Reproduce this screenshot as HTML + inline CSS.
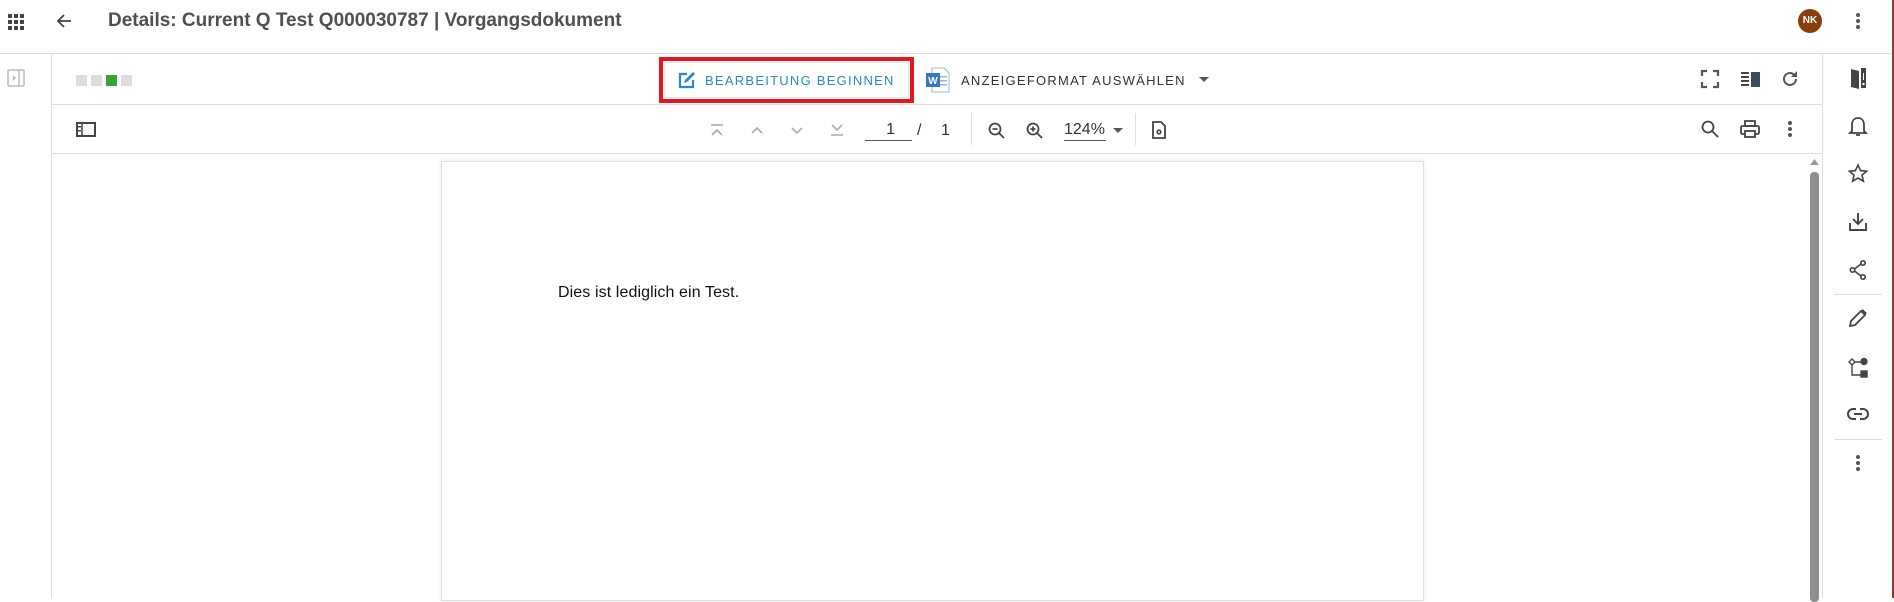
<!DOCTYPE html>
<html><head><meta charset="utf-8"><style>
*{margin:0;padding:0;box-sizing:border-box}
body{width:1894px;height:598px;overflow:hidden;background:#fff;font-family:"Liberation Sans",sans-serif;position:relative;color:#333}
.a{position:absolute}
svg{position:absolute;overflow:visible}
.hl{position:absolute;height:1px;background:#dedede}
.vl{position:absolute;width:1px;background:#dedede}
.btxt{position:absolute;font-size:13px;letter-spacing:1.25px;font-weight:500;white-space:nowrap}
</style></head><body>
<svg style="left:8px;top:14px" width="16" height="16" viewBox="0 0 16 16" fill="#444">
<rect x="0" y="0" width="4" height="4"/><rect x="6" y="0" width="4" height="4"/><rect x="12" y="0" width="4" height="4"/>
<rect x="0" y="6" width="4" height="4"/><rect x="6" y="6" width="4" height="4"/><rect x="12" y="6" width="4" height="4"/>
<rect x="0" y="12" width="4" height="4"/><rect x="6" y="12" width="4" height="4"/><rect x="12" y="12" width="4" height="4"/></svg>
<svg style="left:56px;top:13px" width="16" height="16" viewBox="0 0 16 16"><path d="M15 8H2M8 2L2 8l6 6" stroke="#444" stroke-width="1.8" fill="none"/></svg>
<div class="a" style="left:108px;top:10px;font-size:19px;font-weight:bold;color:#505050;white-space:nowrap">Details: Current Q Test Q000030787 | Vorgangsdokument</div>
<div class="a" style="left:1798px;top:9px;width:24px;height:24px;border-radius:50%;background:#8a3e0c;color:#fff;font-size:10px;font-weight:bold;text-align:center;line-height:24px">NK</div>
<svg style="left:1856px;top:13px" width="4" height="16"><circle cx="2" cy="2" r="2" fill="#555"/><circle cx="2" cy="8" r="2" fill="#555"/><circle cx="2" cy="14" r="2" fill="#555"/></svg>
<div class="hl" style="left:0;top:53px;width:1893px"></div>
<div class="a" style="left:1892px;top:0;width:2px;height:598px;background:#8b3a2e"></div>
<div class="vl" style="left:51px;top:54px;height:544px"></div>
<svg style="left:7px;top:69px" width="18" height="18" viewBox="0 0 18 18"><rect x="1" y="1" width="16" height="16" rx="1" fill="none" stroke="#bbb" stroke-width="1.5"/><line x1="12" y1="1" x2="12" y2="17" stroke="#bbb" stroke-width="1.5"/><path d="M6 6l3 3-3 3z" fill="#bbb"/></svg>
<div class="a" style="left:76px;top:75px;width:11px;height:11px;background:#ddd"></div>
<div class="a" style="left:91px;top:75px;width:11px;height:11px;background:#ddd"></div>
<div class="a" style="left:106px;top:75px;width:11px;height:11px;background:#3aa03a"></div>
<div class="a" style="left:121px;top:75px;width:11px;height:11px;background:#ddd"></div>
<div class="a" style="left:659px;top:57px;width:255px;height:46px;border:4px solid #e8151f"></div>
<div class="a" style="left:664px;top:62px;width:245px;height:36px;border:1px solid #e6e6e6;border-radius:3px"></div>
<svg style="left:678px;top:71px" width="18" height="18" viewBox="0 0 18 18"><path d="M9 3H2v13h13V9" fill="none" stroke="#2a88c8" stroke-width="2.2"/><path d="M6 12l1-3 8-8 2 2-8 8z" fill="#2a88c8"/></svg>
<div class="btxt" style="left:705px;top:73px;color:#2a88c8">BEARBEITUNG BEGINNEN</div>
<svg style="left:926px;top:67px" width="24" height="26" viewBox="0 0 24 26"><path d="M6 1h12l5 5v19H6z" fill="#fff" stroke="#9bb3d8"/><rect x="13" y="9" width="8" height="1.5" fill="#9bb3d8"/><rect x="13" y="13" width="8" height="1.5" fill="#9bb3d8"/><rect x="13" y="17" width="8" height="1.5" fill="#9bb3d8"/><rect x="0" y="6" width="14" height="14" fill="#3b75c4"/><text x="7" y="17" font-size="10" fill="#fff" text-anchor="middle" font-family="Liberation Sans" font-weight="bold">W</text></svg>
<div class="btxt" style="left:961px;top:73px;color:#333">ANZEIGEFORMAT AUSWÄHLEN</div>
<svg style="left:1199px;top:77px" width="10" height="5"><path d="M0 0h10L5 5z" fill="#555"/></svg>
<svg style="left:1701px;top:70px" width="18" height="18" viewBox="0 0 18 18" fill="none" stroke="#555" stroke-width="2.2"><path d="M1 6V1h5M12 1h5v5M17 12v5h-5M6 17H1v-5"/></svg>
<svg style="left:1741px;top:72px" width="19" height="15" viewBox="0 0 19 15" fill="#444"><rect x="0" y="0" width="8" height="2"/><rect x="0" y="4" width="8" height="2"/><rect x="0" y="8" width="8" height="2"/><rect x="0" y="12" width="8" height="2"/><rect x="10" y="0" width="9" height="15" fill="#3f4a5a"/></svg>
<svg style="left:1781px;top:70px" width="18" height="18" viewBox="0 0 18 18"><path d="M15 9a6 6 0 1 1-2-4.5" fill="none" stroke="#555" stroke-width="2"/><path d="M16 1v6h-6z" fill="#555"/></svg>
<div class="hl" style="left:51px;top:104px;width:1772px"></div>
<svg style="left:76px;top:122px" width="20" height="15" viewBox="0 0 20 15"><rect x="1" y="1" width="18" height="13" fill="none" stroke="#444" stroke-width="2"/><line x1="6" y1="1" x2="6" y2="14" stroke="#444" stroke-width="1.5"/><rect x="2" y="4" width="3" height="1.5" fill="#444"/><rect x="2" y="8" width="3" height="1.5" fill="#444"/></svg>
<svg style="left:711px;top:124px" width="12" height="12" viewBox="0 0 12 12" fill="none" stroke="#aaa" stroke-width="1.6"><path d="M0 1h12M1 11l5-5 5 5"/></svg>
<svg style="left:751px;top:126px" width="12" height="8" viewBox="0 0 12 8" fill="none" stroke="#aaa" stroke-width="1.6"><path d="M1 7l5-5 5 5"/></svg>
<svg style="left:791px;top:127px" width="12" height="8" viewBox="0 0 12 8" fill="none" stroke="#aaa" stroke-width="1.6"><path d="M1 1l5 5 5-5"/></svg>
<svg style="left:831px;top:124px" width="12" height="12" viewBox="0 0 12 12" fill="none" stroke="#aaa" stroke-width="1.6"><path d="M1 1l5 5 5-5M0 11h12"/></svg>
<div class="a" style="left:865px;top:121px;width:47px;height:20px;border-bottom:1px solid #555;text-align:right;padding-right:17px;font-size:16px;color:#333">1</div>
<div class="a" style="left:917px;top:122px;font-size:16px;color:#333">/</div>
<div class="a" style="left:941px;top:122px;font-size:16px;color:#333">1</div>
<div class="vl" style="left:971px;top:113px;height:32px"></div>
<svg style="left:988px;top:122px" width="18" height="18" viewBox="0 0 18 18" fill="none" stroke="#444" stroke-width="1.8"><circle cx="7" cy="7" r="5.5"/><path d="M11 11l5 5M4.5 7h5"/></svg>
<svg style="left:1026px;top:122px" width="18" height="18" viewBox="0 0 18 18" fill="none" stroke="#444" stroke-width="1.8"><circle cx="7" cy="7" r="5.5"/><path d="M11 11l5 5M4.5 7h5M7 4.5v5"/></svg>
<div class="a" style="left:1064px;top:121px;width:42px;height:20px;border-bottom:1px solid #555;font-size:16px;color:#333">124%</div>
<svg style="left:1113px;top:128px" width="10" height="5"><path d="M0 0h10L5 5z" fill="#555"/></svg>
<div class="vl" style="left:1135px;top:113px;height:32px"></div>
<svg style="left:1152px;top:121px" width="14" height="18" viewBox="0 0 14 18"><path d="M1 1h8l4 4v12H1z" fill="none" stroke="#444" stroke-width="1.8"/><circle cx="7" cy="11" r="2.6" fill="#444"/><circle cx="7" cy="11" r="1" fill="#fff"/></svg>
<svg style="left:1701px;top:120px" width="18" height="18" viewBox="0 0 18 18" fill="none" stroke="#444" stroke-width="1.8"><circle cx="7" cy="7" r="5.5"/><path d="M11 11l6 6"/></svg>
<svg style="left:1740px;top:120px" width="20" height="18" viewBox="0 0 20 18" fill="none" stroke="#444" stroke-width="1.8"><rect x="5" y="1" width="10" height="5"/><rect x="1" y="6" width="18" height="8" rx="1.5"/><rect x="5" y="11" width="10" height="6" fill="#fff"/></svg>
<svg style="left:1788px;top:121px" width="4" height="16"><circle cx="2" cy="2" r="2" fill="#555"/><circle cx="2" cy="8" r="2" fill="#555"/><circle cx="2" cy="14" r="2" fill="#555"/></svg>
<div class="hl" style="left:51px;top:153px;width:1772px"></div>
<div class="a" style="left:441px;top:161px;width:983px;height:440px;background:#fff;border:1px solid #e0e0e0;box-shadow:0 0 6px rgba(0,0,0,.08)"></div>
<div class="a" style="left:558px;top:284px;font-size:16px;color:#111;white-space:nowrap;letter-spacing:0.1px">Dies ist lediglich ein Test.</div>
<svg style="left:1810px;top:159px" width="9" height="6"><path d="M0 6L4.5 0 9 6z" fill="#999"/></svg>
<div class="a" style="left:1810px;top:172px;width:9px;height:430px;background:#8f8f8f;border-radius:4px"></div>
<div class="vl" style="left:1822px;top:54px;height:544px"></div>
<svg style="left:1850px;top:66px" width="18" height="24" viewBox="0 0 18 24" fill="#444"><path d="M1 3l8 2v18l-8-2z"/><path d="M11 2h5v20h-5z"/><circle cx="13.5" cy="18" r="1.2" fill="#fff"/><rect x="13" y="7" width="1" height="7" fill="#fff"/></svg>
<svg style="left:1849px;top:116px" width="18" height="22" viewBox="0 0 18 22" fill="none" stroke="#444" stroke-width="1.8"><path d="M9 2c-4 0-6 3-6 7v6l-2 2h16l-2-2V9c0-4-2-7-6-7zM7 19h4"/></svg>
<svg style="left:1848px;top:164px" width="20" height="19" viewBox="0 0 20 19" fill="none" stroke="#444" stroke-width="1.6"><path d="M10 1l2.6 5.6 6 .6-4.6 4 1.4 6L10 14l-5.4 3.2 1.4-6-4.6-4 6-.6z"/></svg>
<svg style="left:1849px;top:212px" width="18" height="19" viewBox="0 0 18 19" fill="none" stroke="#444" stroke-width="1.9"><path d="M9 1v11M4 7l5 5 5-5M1 11v7h16v-7"/></svg>
<svg style="left:1849px;top:260px" width="18" height="20" viewBox="0 0 18 20" fill="none" stroke="#444" stroke-width="1.7"><circle cx="14" cy="3" r="2.2"/><circle cx="3.5" cy="10" r="2.2"/><circle cx="14" cy="17" r="2.2"/><path d="M5.5 9l6.5-5M5.5 11l6.5 5"/></svg>
<div class="hl" style="left:1834px;top:294px;width:48px"></div>
<svg style="left:1849px;top:309px" width="18" height="18" viewBox="0 0 18 18"><path d="M1 17l1-5L12 2l4 4L6 16z" fill="none" stroke="#444" stroke-width="1.8"/><path d="M13 1l4 4" stroke="#444" stroke-width="2.5"/></svg>
<svg style="left:1848px;top:358px" width="20" height="20" viewBox="0 0 20 20" fill="none" stroke="#444" stroke-width="1.4"><path d="M4 1l3 3-3 3-3-3z"/><circle cx="16" cy="3.5" r="3" fill="#444"/><path d="M4 7v10h10M7 4h6"/><rect x="13" y="13" width="6" height="6" fill="#444"/></svg>
<svg style="left:1848px;top:408px" width="20" height="12" viewBox="0 0 20 12" fill="none" stroke="#444" stroke-width="2"><path d="M8 1H5a5 5 0 0 0 0 10h3M12 1h3a5 5 0 0 1 0 10h-3M6 6h8"/></svg>
<div class="hl" style="left:1834px;top:439px;width:48px"></div>
<svg style="left:1856px;top:455px" width="4" height="16"><circle cx="2" cy="2" r="2" fill="#555"/><circle cx="2" cy="8" r="2" fill="#555"/><circle cx="2" cy="14" r="2" fill="#555"/></svg>
</body></html>
